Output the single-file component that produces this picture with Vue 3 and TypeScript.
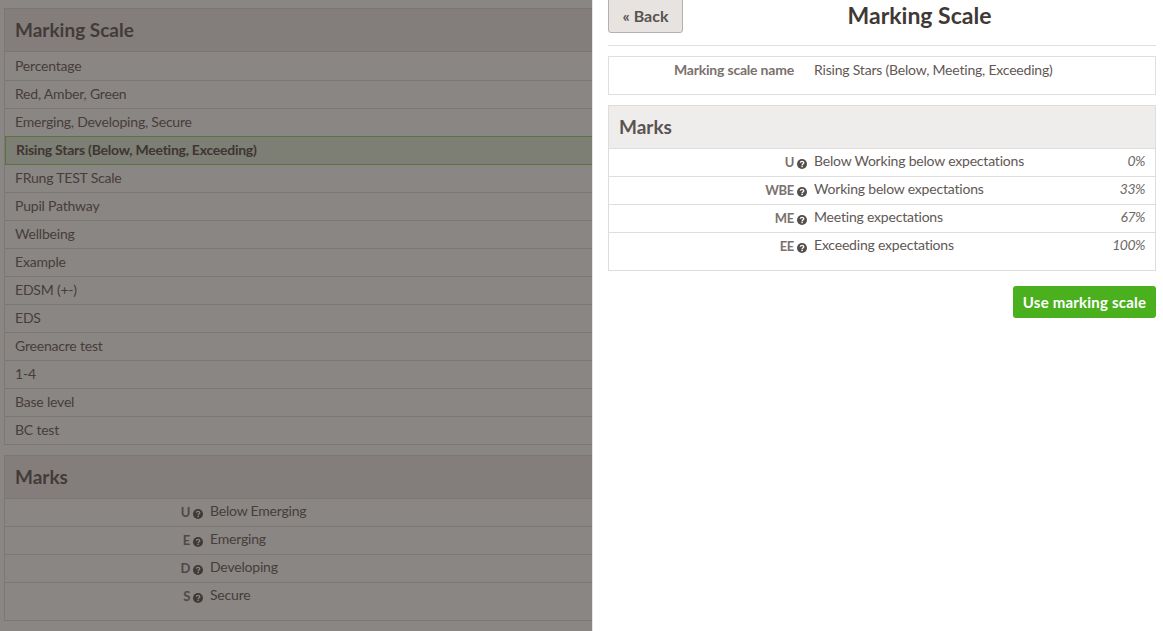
<script setup lang="ts">
interface Mark { code: string; label: string; pct?: string }
const scales: string[] = ['Percentage','Red, Amber, Green','Emerging, Developing, Secure','Rising Stars (Below, Meeting, Exceeding)','FRung TEST Scale','Pupil Pathway','Wellbeing','Example','EDSM (+-)','EDS','Greenacre test','1-4','Base level','BC test']
const selected = 'Rising Stars (Below, Meeting, Exceeding)'
const leftMarks: Mark[] = [{code:'U',label:'Below Emerging'},{code:'E',label:'Emerging'},{code:'D',label:'Developing'},{code:'S',label:'Secure'}]
const rightMarks: Mark[] = [{code:'U',label:'Below Working below expectations',pct:'0%'},{code:'WBE',label:'Working below expectations',pct:'33%'},{code:'ME',label:'Meeting expectations',pct:'67%'},{code:'EE',label:'Exceeding expectations',pct:'100%'}]
</script>

<template>
  <div class="root">
    <main class="page">
      <section class="box">
        <h2 class="box-head">Marking Scale</h2>
        <div v-for="s in scales" :key="s" class="scale" :class="{ on: s === selected }">{{ s }}</div>
      </section>
      <section class="box marks">
        <h2 class="box-head">Marks</h2>
        <div v-for="m in leftMarks" :key="m.code" class="mark">
          <span class="code">{{ m.code }}<svg class="help" viewBox="0 0 20 20"><circle cx="10" cy="10" r="10" fill="currentColor"/><path d="M6.6 7.6C6.8 5.6 8.2 4.6 10.1 4.6c2 0 3.4 1.2 3.4 2.9 0 2.6-3.3 2.6-3.3 5" fill="none" stroke="#fff" stroke-width="2.6"/><rect x="8.7" y="13.6" width="3" height="2.7" fill="#fff"/></svg></span>
          <span class="desc">{{ m.label }}</span>
        </div>
      </section>
    </main>
    <div class="overlay"></div>
    <aside class="drawer">
      <header class="top">
        <button class="back">« Back</button>
        <h1>Marking Scale</h1>
      </header>
      <div class="name-box">
        <span class="name-label">Marking scale name</span>
        <span class="desc">Rising Stars (Below, Meeting, Exceeding)</span>
      </div>
      <section class="box right-marks">
        <h2 class="box-head">Marks</h2>
        <div v-for="m in rightMarks" :key="m.code" class="mark">
          <span class="code">{{ m.code }}<svg class="help" viewBox="0 0 20 20"><circle cx="10" cy="10" r="10" fill="currentColor"/><path d="M6.6 7.6C6.8 5.6 8.2 4.6 10.1 4.6c2 0 3.4 1.2 3.4 2.9 0 2.6-3.3 2.6-3.3 5" fill="none" stroke="#fff" stroke-width="2.6"/><rect x="8.7" y="13.6" width="3" height="2.7" fill="#fff"/></svg></span>
          <span class="desc">{{ m.label }}</span>
          <em class="pct">{{ m.pct }}</em>
        </div>
      </section>
      <div class="actions"><button class="use">Use marking scale</button></div>
    </aside>
  </div>
</template>

<style>
html, body { margin: 0; height: 100%; overflow: hidden; background: #fff; }
</style>

<style scoped>
.root { position: relative; width: 1163px; height: 631px; overflow: hidden; font-family: Lato, "Liberation Sans", sans-serif; font-size: 14px; letter-spacing: -.2px; color: #5f5855; background: #fff; }
.page { padding: 8px 7px 0 4px; }
.box { border: 1px solid #dfdddc; background: #fff; }
.box-head { margin: 0; height: 42px; line-height: 42px; padding: 0 10px; background: #eeedec; border-bottom: 1px solid #dfdddc; font-size: 19px; letter-spacing: 0; font-weight: 700; color: #5a5350; }
.scale { height: 27px; line-height: 26px; padding: 0 10px; border-top: 1px solid #dfdddc; }
.box-head + .scale { border-top: 0; height: 28px; line-height: 28px; }
.scale.on { height: 27px; line-height: 26px; padding: 0 10px; letter-spacing: -.25px; background: #e1ecd9; border: 1px solid #8ad86a; font-weight: 700; color: #4d4744; }
.scale.on + .scale { border-top: 0; height: 27px; line-height: 26px; }
.marks { margin-top: 10px; padding-bottom: 10px; }
.mark { display: flex; height: 27px; line-height: 24px; border-top: 1px solid #dfdddc; }
.box-head + .mark { border-top: 0; }
.code { box-sizing: border-box; width: 205px; padding-right: 7px; display: flex; justify-content: flex-end; align-items: center; height: 26px; font-size: 13px; letter-spacing: -.3px; font-weight: 700; color: #7a716d; gap: 3px; }
.help { width: 10px; height: 10px; margin-top: 3px; color: #544e4b; flex: none; }
.desc { flex: 1; }
.pct { padding-right: 10px; letter-spacing: -.5px; color: #6f6966; }
.overlay { position: absolute; inset: 0; background: rgba(50, 42, 38, .57); }
.drawer { position: absolute; top: 0; right: 0; bottom: 0; box-sizing: border-box; width: 571px; padding: 0 7px 0 15px; background: #fff; border-left: 1px solid #e6e3e1; }
.top { position: relative; height: 45px; border-bottom: 1px solid #e0dfde; margin-bottom: 10px; display: flex; }
.back { box-sizing: border-box; width: 75px; height: 36px; margin-top: -3px; font: 700 16px Lato, "Liberation Sans", sans-serif; color: #5a5350; background: #e6e3e1; border: 1px solid #b5b0ad; border-radius: 3px; }
h1 { position: absolute; left: 0; right: 0; top: 0; margin: 0; padding-left: 75px; text-align: center; font-size: 23px; letter-spacing: 0; line-height: 31px; font-weight: 700; color: #3f3936; }
.name-box { display: flex; height: 36px; border: 1px solid #e0dfde; margin-bottom: 10px; line-height: 24px; padding-top: 1px; box-sizing: content-box; }
.name-label { box-sizing: border-box; width: 205px; padding-right: 20px; text-align: right; font-weight: 700; color: #7a716d; }
.right-marks { padding-bottom: 10px; }
.actions { display: flex; justify-content: flex-end; margin-top: 15px; }
.use { height: 32px; width: 143px; padding: 0; border: 0; border-radius: 3px; background: #4ab01e; color: #fff; font: 700 15px Lato, "Liberation Sans", sans-serif; letter-spacing: .2px; }
</style>
